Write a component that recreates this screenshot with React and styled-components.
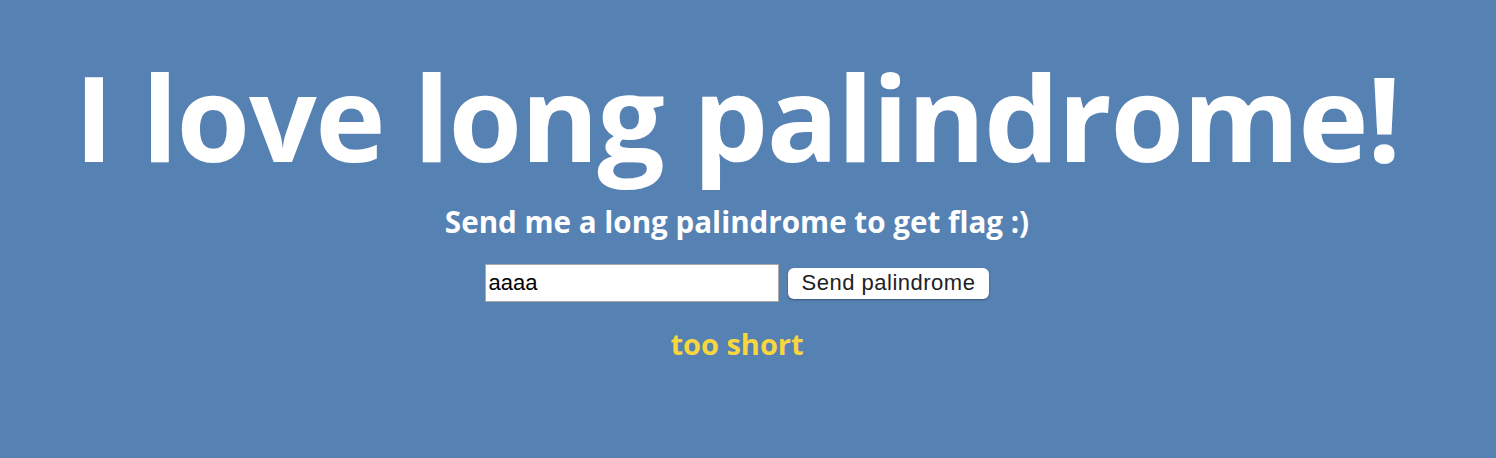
import styled, { createGlobalStyle } from 'styled-components';

const Global = createGlobalStyle`
  html, body {
    margin: 0;
    padding: 0;
    background: #5681b3;
  }
  body {
    font-family: "Open Sans", "Lato", sans-serif;
    height: 458px;
    overflow: hidden;
  }
`

function App() {
  return <Page>
    <Global />
    <Title>I love long palindrome!</Title>
    <Subtitle>Send me a long palindrome to get flag :)</Subtitle>
    <Form onSubmit={e => e.preventDefault()}>
      <Input defaultValue="aaaa" />
      <Button type="submit">Send palindrome</Button>
    </Form>
    <Result>too short</Result>
  </Page>
}

export default App;

const Page = styled.div`
    display: flex;
    flex-direction: column;
    align-items: center;
    padding-top: 46px;
    padding-right: 22px;
    color: #fff;`
const Title = styled.h1`
    margin: 0;
    font-size: 119px;
    font-weight: 700;
    line-height: 140px;
    letter-spacing: -1.4px;
    white-space: nowrap;`
const Subtitle = styled.h3`
    margin: 18px 0 0;
    font-size: 29.6px;
    font-weight: 700;
    line-height: 36px;`
const Form = styled.form`
    display: flex;
    align-items: center;
    gap: 9px;
    margin-top: 24px;`
const Input = styled.input`
    width: 294px;
    height: 38px;
    box-sizing: border-box;
    border: 1px solid #aaa;
    padding: 0 3px;
    font-family: "Liberation Sans", Arial, sans-serif;
    font-size: 22px;
    color: #000;
    background: #fff;
    outline: none;`
const Button = styled.button`
    height: 31px;
    padding: 0 14px;
    border: none;
    border-radius: 6px;
    background: #fff;
    box-shadow: 0 1px 2px rgba(0,0,0,0.35);
    font-family: "Liberation Sans", Arial, sans-serif;
    font-size: 22px;
    letter-spacing: 0.5px;
    color: #222;`
const Result = styled.h3`
    margin: 22px 0 0;
    font-size: 29px;
    font-weight: 700;
    color: #f8d63e;`
